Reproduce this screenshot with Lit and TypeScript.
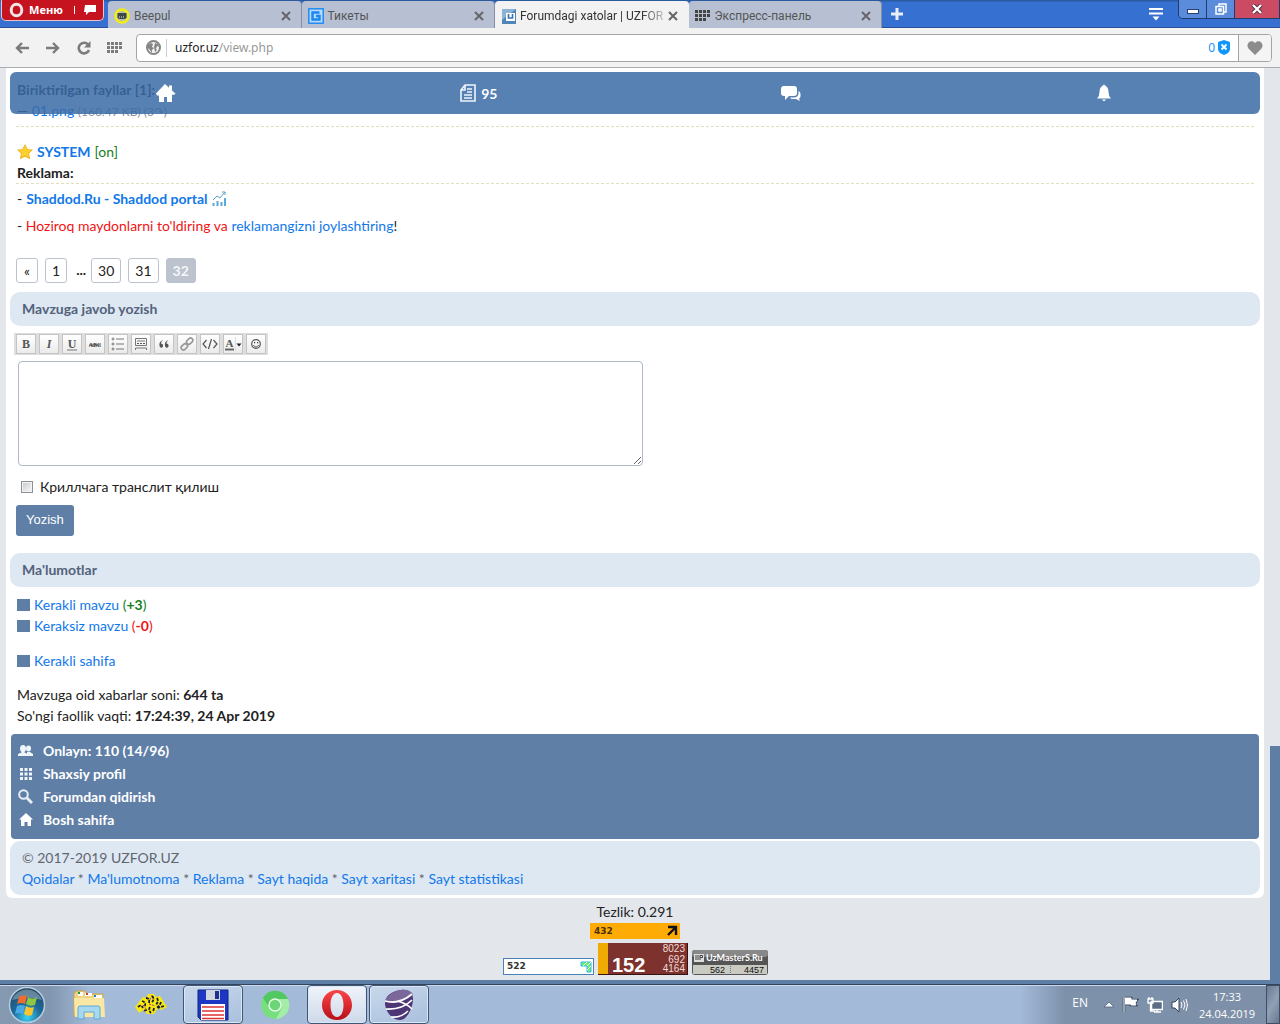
import { LitElement, html, svg, css } from "lit";
import { customElement } from "lit/decorators.js";
import { classMap } from "lit/directives/class-map.js";

const grid = svg`<g fill="currentColor">${[0, 1, 2].map((r) =>
  [0, 1, 2, 3].map((c) => (r === 2 && c === 3 ? "" : svg`<rect x=${c * 4} y=${1 + r * 4} width="3" height="3"/>`))
)}</g>`;

const house = svg`<path fill="currentColor" d="M0 9.5 9 0l4 3.8V1.5h3v5l3.6 3.3-1.6 1H16V18h-5v-5H8v5H3v-6.5H1z"/>`;

@customElement("browser-chrome")
export class BrowserChrome extends LitElement {
  static styles = css`
    :host { display: block; font: 12px/16px "Noto Sans", "Open Sans", sans-serif; color: #555; }
    button { border: 0; margin: 0; padding: 0; background: none; color: inherit; font: inherit; display: flex; align-items: center; justify-content: center; }
    svg { display: block; flex: none; }
    .strip { display: flex; align-items: flex-start; height: 28px; background: linear-gradient(#2b5b9f 0, #2b5b9f 1px, #3671d2 2px); border-bottom: 1px solid #2c509a; box-sizing: border-box; }
    .menu { width: 103px; height: 21px; margin: 0 4px 0 1px; background: #c5131f; border: 1px solid #eec3c8; border-top: 0; border-radius: 0 0 5px 5px; color: #fff; font: bold 11px/16px "Open Sans", sans-serif; gap: 5px; }
    .bar { width: 1px; height: 8px; background: #fff; margin: 0 4px 0 6px; }
    .tabs { display: flex; flex: 0 1 774px; min-width: 0; font-family: Roboto, "Open Sans", sans-serif; }
    .tab { flex: 1 1 0; min-width: 0; height: 27px; margin-top: 1px; box-sizing: border-box; display: flex; align-items: center; gap: 4px; padding: 2px 10px 0 6px; background: #b6c0d2; border-right: 1px solid #8390a8; border-radius: 4px 4px 0 0; }
    .tab.active { background: #f2f2f2; color: #333; border-color: #f2f2f2; height: 28px; gap: 3px; }
    .tab span { flex: 1; white-space: nowrap; }
    .tab.active span { -webkit-mask: linear-gradient(90deg, #000 84%, rgba(0, 0, 0, 0.2)); }
    .plus { width: 30px; height: 28px; color: #e8eefa; }
    .grow { flex: 1; }
    .more { width: 30px; height: 28px; color: #fff; margin-right: 7px; }
    .win { display: flex; border: 1px solid #20396f; border-top: 0; border-radius: 0 0 0 5px; overflow: hidden; }
    .win button { width: 28px; height: 18px; background: #5b8cdc; border-right: 1px solid #20396f; }
    .win .close { width: 44px; background: #cb4b62; border: 0; }
    .tools { display: flex; align-items: center; height: 39px; background: #f2f2f2; border-bottom: 1px solid #a9abae; color: #7b7b7b; padding: 0 8px 0 6px; }
    .tools > button { width: 31px; height: 28px; flex: none; }
    .address { flex: 1; display: flex; align-items: center; height: 28px; box-sizing: border-box; background: #fff; border: 1px solid #a2a5a8; border-radius: 4px; margin-left: 6px; padding-left: 9px; overflow: hidden; }
    .url { flex: 1; border-left: 1px solid #ccc; margin-left: 5px; padding-left: 8px; height: 18px; display: flex; align-items: center; color: #999; }
    .url b { font-weight: normal; color: #222; }
    .shield { color: #1b8fff; gap: 3px; margin-right: 8px; }
    .heart { width: 33px; height: 28px; border-left: 1px solid #a2a5a8; background: #f4f4f4; color: #8c8c8c; }
  `;

  private tab(title: string, icon: unknown, active = false) {
    return html`<div class=${classMap({ tab: true, active })} role="tab" aria-selected=${active}>
      <svg width="16" height="16" viewBox="0 0 16 16">${icon}</svg><span>${title}</span>
      <button aria-label="Закрыть"><svg width="10" height="10" viewBox="0 0 10 10"><path d="M1 1l8 8M9 1L1 9" stroke="#666" stroke-width="2"/></svg></button>
    </div>`;
  }

  render() {
    return html`
      <div class="strip">
        <button class="menu">
          <svg width="15" height="16" viewBox="0 0 15 16"><ellipse cx="7.5" cy="8" rx="5.3" ry="5.8" fill="none" stroke="#f3e6e6" stroke-width="3"/></svg>
          Меню <i class="bar"></i>
          <svg width="12" height="10" viewBox="0 0 12 10"><path d="M1 0h11v7H5L2 10V7H0z" fill="#fff"/></svg>
        </button>
        <div class="tabs" role="tablist">
          ${this.tab("Beepul", svg`<circle cx="8" cy="8" r="6.5" fill="#b9bfae" stroke="#f3ed12" stroke-width="2.6"/><path d="M3.500 5h9v5l-2 1H5.500l-2-1z" fill="#3d4649"/><path d="M5 9h6" stroke="#eee" stroke-dasharray="1 1"/>`)}
          ${this.tab("Тикеты", svg`<rect x=".8" y=".8" width="14.4" height="14.4" fill="#b9d8fb" stroke="#1688f3" stroke-width="1.4"/><path d="M11.5 4.5h-7v7h7V8H8" fill="none" stroke="#1688f3" stroke-width="2.4"/>`)}
          ${this.tab("Forumdagi xatolar | UZFOR", svg`<rect width="14" height="15" x="1" y="1" fill="#4f86b8"/><path d="M1 1h14L1 12z" fill="#8bb3d5"/><path d="M5 5h9v8H5z" fill="#fff"/><path d="M7.5 6v4h4V6" fill="none" stroke="#3770a7" stroke-width="1.6"/>`, true)}
          ${this.tab("Экспресс-панель", svg`<g color="#444" transform="translate(0 1)">${grid}</g>`)}
        </div>
        <button class="plus" aria-label="Новая вкладка"><svg width="12" height="12" viewBox="0 0 12 12"><path d="M6 0v12M0 6h12" stroke="currentColor" stroke-width="3"/></svg></button>
        <div class="grow"></div>
        <button class="more" aria-label="Меню вкладок"><svg width="14" height="14" viewBox="0 0 14 14"><path d="M0 2h14M0 6.500h14" stroke="currentColor" stroke-width="2"/><path d="M3.500 9.500h7L7 13.500z" fill="currentColor"/></svg></button>
        <div class="win">
          <button aria-label="Свернуть"><svg width="12" height="12" viewBox="0 0 12 12"><rect x=".5" y="6.500" width="11" height="4" fill="#fff" stroke="#274174"/></svg></button>
          <button aria-label="Развернуть"><svg width="12" height="12" viewBox="0 0 12 12"><g fill="none" stroke="#fff" stroke-width="1.500"><path d="M4 3V1h7v8H9"/><rect x="1" y="3.500" width="7.500" height="7.500"/><path d="M4 6h2v2H4z"/></g></svg></button>
          <button class="close" aria-label="Закрыть окно"><svg width="12" height="10" viewBox="0 0 12 10"><path d="M2 1l8 8M10 1L2 9" stroke="#4a2a3a" stroke-width="4"/><path d="M2 1l8 8M10 1L2 9" stroke="#fff" stroke-width="2.400"/></svg></button>
        </div>
      </div>
      <div class="tools">
        <button aria-label="Назад"><svg width="14" height="12" viewBox="0 0 14 12"><path d="M14 6H2M7 1L2 6l5 5" fill="none" stroke="currentColor" stroke-width="2.400"/></svg></button>
        <button aria-label="Вперёд"><svg width="14" height="12" viewBox="0 0 14 12"><path d="M0 6h12M7 1l5 5-5 5" fill="none" stroke="currentColor" stroke-width="2.400"/></svg></button>
        <button aria-label="Обновить"><svg width="14" height="14" viewBox="0 0 14 14"><path d="M11 3.500A5.300 5.300 0 1 0 12 9" fill="none" stroke="currentColor" stroke-width="2.600"/><path d="M13.500 0v6.500H7z" fill="currentColor"/></svg></button>
        <button aria-label="Экспресс-панель"><svg width="15" height="13" viewBox="0 0 15 13">${grid}</svg></button>
        <div class="address">
          <svg width="15" height="15" viewBox="0 0 15 15"><circle cx="7.500" cy="7.500" r="6.500" fill="#f2f2f2" stroke="#858585" stroke-width="2"/><path d="M2 5l3-2 2 1-1 3 2 1-2 2v3L4 10 2 8zM9 3l3 1 1 3-2-1-1 3 1 1-2 2-1-5z" fill="#858585"/></svg>
          <div class="url"><b>uzfor.uz</b>/view.php</div>
          <button class="shield">0 <svg width="12" height="15" viewBox="0 0 12 15"><path d="M6 0l6 2v7c0 3-3 5-6 6-3-1-6-3-6-6V2z" fill="#1296fb"/><path d="M3.500 4.500l5 5M8.500 4.500l-5 5" stroke="#fff" stroke-width="1.800"/></svg></button>
          <button class="heart" aria-label="Закладка"><svg width="16" height="14" viewBox="0 0 16 14"><path d="M8 14L1.500 7.500C-2 3 4-2.500 8 2c4-4.500 10 1 6.500 5.500z" fill="currentColor"/></svg></button>
        </div>
      </div>`;
  }
}

@customElement("forum-page")
export class ForumPage extends LitElement {
  static styles = css`
    :host { display: flex; position: relative; background: #e3e7ec; font: 14px/21px Lato, "Open Sans", sans-serif; color: #222; overflow: hidden; }
    svg { display: block; flex: none; }
    a { color: #1178ea; text-decoration: none; }
    p, h2 { margin: 0; }
    .scroll { flex: 1; min-width: 0; padding: 0 6px 5px; border-bottom: 4px solid #5e7ea6; }
    .track { width: 10px; flex: none; display: flex; align-items: flex-end; }
    .thumb { width: 10px; height: 26%; background: #5e7ea6; }
    .sheet { background: #fff; border-radius: 0 0 6px 6px; padding: 11px 4px 3px; }
    .inset { padding: 0 6px; }
    .topbar { position: absolute; top: 4px; left: 10px; right: 20px; height: 42px; border-radius: 6px; background: rgba(57, 107, 166, 0.85); display: grid; grid-template-columns: repeat(4, 1fr); place-items: center; font-weight: bold; }
    .topbar a { color: #fff; display: flex; align-items: center; gap: 5px; }
    .dash { border-bottom: 1px dashed #dfdfbd; }
    .files { padding: 0 1px 4px; margin-bottom: 14px; }
    .small { font-size: 12px; color: #8892a0; }
    .row { display: flex; align-items: center; gap: 4px; padding-left: 1px; }
    .on { color: #16801b; }
    .title { padding-left: 1px; font-weight: bold; margin-bottom: 4px; }
    .ad { margin-bottom: 6px; }
    .warn { color: #f01414; }
    .text { padding-left: 1px; }
    .pages { display: flex; margin: 22px 0 9px; line-height: 24px; }
    .pages a, .pages b { box-sizing: border-box; height: 25px; border: 1px solid #bcc3cf; border-radius: 3px; padding: 0 6px; margin-right: 7px; color: #222; min-width: 22px; text-align: center; }
    .pages i { margin: 0 5px 0 2px; font-weight: bold; font-style: normal; }
    .pages b { background: #bcc3cf; color: #f4f6f8; }
    h2 { background: #dee8f2; color: #53627b; border-radius: 10px; font-size: 14px; line-height: 34px; padding: 0 12px; }
    .editor { display: inline-flex; gap: 3px; margin: 7px 0 6px 4px; padding: 1px 2px; background: #dedede; height: 22px; box-sizing: border-box; }
    .editor button { box-sizing: border-box; width: 20px; height: 20px; padding: 0; border: 1px solid #c4c4c4; background: linear-gradient(#fff, #ebebeb); display: grid; place-items: center; }
    textarea { display: block; box-sizing: border-box; width: 50%; height: 105px; margin: 0 8px 10px; border: 1px solid #aebaca; border-radius: 4px; background: #fff; }
    .check { display: flex; align-items: center; gap: 7px; padding-left: 5px; }
    .check input { appearance: none; width: 12px; height: 12px; margin: 0; border: 1px solid #8c8f94; background: linear-gradient(135deg, #c5c9cd, #fafafa); box-shadow: inset 0 0 0 1px #f3f3f3; }
    .send { display: block; height: 31px; margin: 8px 0 17px 6px; padding: 0 10px 2px; border: 0; border-radius: 3px; background: #5f7fa7; color: #fff; font: 13px/20px "Liberation Sans", sans-serif; }
    .links { padding: 7px 6px 8px; }
    .sq { width: 13px; height: 12px; background: #5e7ea6; }
    .gap { margin: 14px 0 13px; }
    .red { color: #f01414; }
    .nav { margin: 0 1px 2px; padding: 5px 7px 8px; background: #5f7fa7; border-radius: 4px; font-weight: bold; }
    .nav a { display: flex; align-items: center; gap: 10px; color: #fff; line-height: 23px; width: max-content; }
    .foot { background: #dee8f2; border-radius: 10px; padding: 6px 12px; color: #5f6670; }
    .stats { display: flex; flex-direction: column; align-items: center; padding-top: 3px; }
    .counters { display: flex; align-items: flex-end; gap: 4px; margin-top: 4px; }
    .score { margin-top: 1px; }
    .counters svg { font-family: "Liberation Sans", sans-serif; }
  `;

  private tool(label: string, icon: unknown) {
    return html`<button type="button" aria-label=${label}><svg width="18" height="16" viewBox="0 0 18 16">${icon}</svg></button>`;
  }

  render() {
    const serif = "Liberation Serif";
    const letter = (t: string, style = "normal") =>
      svg`<text x="9" y="12" text-anchor="middle" font-family=${serif} font-weight="bold" font-style=${style} font-size="12" fill="#555">${t}</text>`;
    return html`
      <div class="scroll">
        <div class="sheet">
          <div class="inset">
            <div class="files dash"><b>Biriktirilgan fayllar [1]:</b><br />— <a href="#">01.png</a> <span class="small">(160.47 KB) (3↷)</span></div>
            <div class="row"><svg width="16" height="16" viewBox="0 0 16 16"><path d="M8 0l2.600 5 5.400.700-4 3.800 1.200 5.700L8 12.800 2.800 15.200 4 9.500 0 5.700 5.400 5z" fill="#f0b41c"/><path d="M8 1.500l2 4 4.500.5-3.500 3 1 4.500L8 11.500l-4 2L5 9 1.500 6 6 5.500z" fill="#fbcf30"/></svg>
              <a href="#"><b>SYSTEM</b></a><span class="on">[on]</span></div>
            <p class="title dash">Reklama:</p>
            <div class="row ad"><span>-</span><a href="#"><b>Shaddod.Ru - Shaddod portal</b></a>
              <svg width="14" height="16" viewBox="0 0 14 16"><path d="M1 9l4-4 3 2 5-6M10 1h3v3" fill="none" stroke="#5ba3cb"/><path d="M1.500 15v-3M5.500 15v-5M9.500 15v-4M13 15V7" stroke="#58aadc" stroke-width="2"/></svg></div>
            <p class="text">- <span class="warn">Hoziroq maydonlarni to'ldiring va</span> <a href="#">reklamangizni joylashtiring</a>!</p>
            <nav class="pages"><a href="#">«</a><a href="#">1</a><i>...</i><a href="#">30</a><a href="#">31</a><b>32</b></nav>
          </div>
          <h2>Mavzuga javob yozish</h2>
          <form>
            <div class="editor">
              ${this.tool("Bold", letter("B"))}
              ${this.tool("Italic", letter("I", "italic"))}
              ${this.tool("Underline", svg`${letter("U")}<path d="M4 14h10" stroke="#777"/>`)}
              ${this.tool("Strike", svg`<text x="9" y="11" text-anchor="middle" font-family=${serif} font-weight="bold" font-size="6" fill="#333">ABC</text><path d="M3 9h12" stroke="#555"/>`)}
              ${this.tool("List", svg`<path d="M7 3h8M7 8h8M7 13h8" stroke="#777"/><g fill="none" stroke="#777"><circle cx="4" cy="3" r="1"/><circle cx="4" cy="8" r="1"/><circle cx="4" cy="13" r="1"/></g>`)}
              ${this.tool("Spoiler", svg`<path d="M3.500 2.500h11v7h-11zM3.500 14v-2h11v2M5 5h8" fill="none" stroke="#777"/><path d="M5 7.500h8" stroke="#555" stroke-dasharray="2 1"/>`)}
              ${this.tool("Quote", svg`<path d="M8 4C5 5 4 7 4.500 10c1 3 4 2 3.500-1-.5-1-1-1.500-2-1.300C6 6 7 5 8 4zM13.500 4c-3 1-4 3-3.500 6 1 3 4 2 3.500-1-.5-1-1-1.500-2-1.300 0-1.700 1-2.700 2-3.700z" fill="#555"/>`)}
              ${this.tool("Link", svg`<g fill="none" stroke="#999" stroke-width="1.700"><rect x="8" y="3" width="7" height="4.500" rx="2.200" transform="rotate(-45 11.500 5)"/><rect x="3" y="8.500" width="7" height="4.500" rx="2.200" transform="rotate(-45 6.500 11)"/></g>`)}
              ${this.tool("Code", svg`<path d="M5.500 4L2 8l3.500 4M12.500 4L16 8l-3.500 4M10.500 3l-3 10" fill="none" stroke="#555" stroke-width="1.200"/>`)}
              ${this.tool("Color", svg`<text x="5.500" y="11" text-anchor="middle" font-family=${serif} font-weight="bold" font-size="11" fill="#555">A</text><path d="M1 13.500h9" stroke="#666" stroke-width="2"/><path d="M12.500 7.500h5L15 10.500z" fill="#222"/><path d="M11.500 1v14" stroke="#ddd"/>`)}
              ${this.tool("Smile", svg`<circle cx="9" cy="8" r="4.300" fill="none" stroke="#555" stroke-width="1.200"/><path d="M6.500 9c1 2.500 4 2.500 5 0" fill="none" stroke="#555"/><path d="M7 6h1.200v1.200H7zM10 6h1.200v1.200H10z" fill="#444"/>`)}
            </div>
            <textarea aria-label="Mavzuga javob yozish"></textarea>
            <div class="inset"><label class="check"><input type="checkbox" />Криллчага транслит қилиш</label></div>
            <button class="send" type="button">Yozish</button>
          </form>
          <h2>Ma'lumotlar</h2>
          <div class="links">
            <div class="row"><i class="sq"></i><span><a href="#">Kerakli mavzu</a> <span class="on">(<b>+3</b>)</span></span></div>
            <div class="row"><i class="sq"></i><span><a href="#">Keraksiz mavzu</a> <span class="red">(<b>-0</b>)</span></span></div>
            <div class="row gap"><i class="sq"></i><a href="#">Kerakli sahifa</a></div>
            <p class="text">Mavzuga oid xabarlar soni: <b>644 ta</b></p>
            <p class="text">So'ngi faollik vaqti: <b>17:24:39, 24 Apr 2019</b></p>
          </div>
          <nav class="nav">
            <a href="#"><svg width="15" height="15" viewBox="0 0 15 15"><g fill="#f0f5fa"><ellipse cx="10.500" cy="5.500" rx="2.500" ry="3"/><path d="M9 9h3l3 2v2H9z"/><ellipse cx="5" cy="5.500" rx="3" ry="3.500"/><path d="M3.500 8h3v1.500L10 11v2H0v-2l3.500-1.500z"/></g></svg>Onlayn: 110 (14/96)</a>
            <a href="#"><svg width="15" height="15" viewBox="0 0 15 15"><path d="M2 2h3v3H2zm4.500 0h3v3h-3zM11 2h3v3h-3zM2 6.500h3v3H2zm4.500 0h3v3h-3zm4.500 0h3v3h-3zM2 11h3v3H2zm4.500 0h3v3h-3zm4.500 0h3v3h-3z" fill="#f0f5fa"/></svg>Shaxsiy profil</a>
            <a href="#"><svg width="15" height="15" viewBox="0 0 15 15"><circle cx="5.500" cy="5.500" r="4.300" fill="none" stroke="#e6edf5" stroke-width="2"/><path d="M9 9l5 5" stroke="#e6edf5" stroke-width="3"/></svg>Forumdan qidirish</a>
            <a href="#"><svg width="15" height="15" viewBox="0 0 15 15"><path d="M8 1l7 6.500h-2V14H9.500v-4h-3v4H3V7.500H1z" fill="#fff"/></svg>Bosh sahifa</a>
          </nav>
          <div class="foot">© 2017-2019 UZFOR.UZ<br />
            <a href="#">Qoidalar</a> * <a href="#">Ma'lumotnoma</a> * <a href="#">Reklama</a> * <a href="#">Sayt haqida</a> * <a href="#">Sayt xaritasi</a> * <a href="#">Sayt statistikasi</a></div>
        </div>
        <div class="stats">
          <span>Tezlik: 0.291</span>
          <svg class="score" width="90" height="16" viewBox="0 0 90 16"><rect width="90" height="16" fill="#ffab05"/><text x="4" y="11" font-family="DejaVu Sans" font-weight="bold" font-size="9" fill="#4a3208">432</text><path d="M78 4h8v8M86 4l-8 8" fill="none" stroke="#111" stroke-width="2.400"/></svg>
          <div class="counters">
            <svg width="91" height="17" viewBox="0 0 91 17"><rect x=".5" y=".5" width="90" height="16" fill="#fff" stroke="#4a82b8"/><text x="4" y="11" font-family="DejaVu Sans" font-weight="bold" font-size="9" fill="#333">522</text><path d="M78 4h10v10h-4V8h-6z" fill="#6dee70" stroke="#35b5e8"/><path d="M80 8l4-4M84 8l4-4M84 12l4-4" stroke="#e8ffe8"/></svg>
            <svg width="90" height="32" viewBox="0 0 90 32"><rect width="90" height="32" fill="#7d322d"/><rect width="10" height="32" fill="#efab02"/><path d="M0 31.500h90M89.500 0v32" stroke="#38120f"/><g fill="#fff"><text x="14" y="29" font-size="20" font-weight="bold">152</text><g font-size="10" fill="#efdcda" text-anchor="end"><text x="87" y="9">8023</text><text x="87" y="20">692</text><text x="87" y="29">4164</text></g></g></svg>
            <svg width="76" height="26" viewBox="0 0 76 26"><rect y="1" width="76" height="25" rx="3" fill="#555"/><rect y="1" width="76" height="7" rx="3" fill="#888"/><rect x="1" y="16" width="74" height="9" fill="#c9cac2"/><path d="M2 5h10v8H2z" fill="#ddd"/><path d="M4 6v5M6 6v5M8 6v5M8 6.500h2.500v2H8" stroke="#444" fill="none"/><text x="14" y="12" font-size="9" font-weight="bold" fill="#fff" font-family="Lato">UzMasterS.Ru</text><g font-size="9" font-family="Liberation Sans" fill="#111"><text x="18" y="24">562</text><text x="52" y="24">4457</text></g><path d="M38.500 17v8" stroke="#777" stroke-dasharray="1 1"/></svg>
          </div>
        </div>
      </div>
      <div class="track"><div class="thumb"></div></div>
      <nav class="topbar">
        <a href="#" aria-label="Bosh sahifa"><svg width="20" height="18" viewBox="0 0 20 18">${house}</svg></a>
        <a href="#"><svg width="16" height="19" viewBox="0 0 16 19"><path d="M5 1h10v16H1V6zM5 1v5H1" fill="none" stroke="#eef4fb" stroke-width="1.600"/><path d="M7 5h5M7 8h5M4 11h8M4 14h8" stroke="#eef4fb" stroke-width="1.500"/></svg>95</a>
        <a href="#" aria-label="Xabarlar"><svg width="20" height="17" viewBox="0 0 20 17"><path d="M3 1h10q3 0 3 3v4q0 3-3 3H8l-4 4v-4H3q-3 0-3-3V4q0-3 3-3z" fill="#fff"/><path d="M17.500 6q2 .500 2 3v2q0 2-1.500 2.500l1 2.500-4-2h-4q-1 0-2-1.500h4q4 0 4.500-4z" fill="#fff"/></svg></a>
        <a href="#" aria-label="Bildirishnomalar"><svg width="14" height="18" viewBox="0 0 14 18"><path d="M6 1.500q1-2 2 0Q11.500 3 11.500 8q0 4 2.500 6.500H0Q2.500 12 2.500 8 2.500 3 6 1.500zM5 15.500h4q-2 3.500-4 0z" fill="#fff"/></svg></a>
      </nav>`;
  }
}

@customElement("task-bar")
export class TaskBar extends LitElement {
  static styles = css`
    :host { display: flex; align-items: center; height: 40px; box-sizing: border-box; border-top: 1px solid #34445c; box-shadow: inset 0 1px #c9d8ec; background: linear-gradient(90deg, #8599b1 0, #8095ae 50px, #a3bad9 90px, #a3bad9 calc(100% - 260px), #7d91ab calc(100% - 215px), #7e90a8 100%); color: #fff; font: 12px/17px "Open Sans", sans-serif; }
    button { border: 0; padding: 0; margin: 0; background: none; color: inherit; font: inherit; display: grid; place-items: center; height: 39px; width: 62px; flex: none; }
    svg { display: block; }
    .start { width: 54px; margin-right: 4px; }
    .open { width: 60px; border: 1px solid #3f5675; border-radius: 4px; box-shadow: inset 0 0 0 1px #dbe7f5; background: linear-gradient(160deg, #c8d8ec, #a9bfdd); margin: 0 1px; }
    .front { background: linear-gradient(#f0f4fa, #cdd9ea); }
    .grow { flex: 1; }
    .tray { display: flex; align-items: center; gap: 8px; }
    .lang { margin: 0 8px 4px 0; }
    .clock { width: 78px; margin-left: 4px; text-align: center; font-size: 11px; }
    .tray + .clock { margin-left: 0; }
    .desk { width: 14px; border: 1px solid #3d4e66; background: linear-gradient(120deg, #6a7c93, #90a1b5, #67798f); }
  `;

  render() {
    return html`
      <button class="start" aria-label="Пуск"><svg width="38" height="38" viewBox="0 0 38 38"><defs><radialGradient id="orb" cx=".5" cy=".85" r=".8"><stop offset="0" stop-color="#3ad1f3"/><stop offset=".5" stop-color="#1d6a9c"/><stop offset="1" stop-color="#254a66"/></radialGradient></defs><circle cx="19" cy="19" r="17.500" fill="url(#orb)" stroke="#b5cbdc" stroke-width="1.500"/><path d="M4 14a16 16 0 0 1 30 0q-14-5-30 0z" fill="#fff" opacity=".3"/><path d="M11 11q4-3 8-1l-2 8q-4-2-8 0z" fill="#ef6b2e"/><path d="M20 11q5 3 9 0l-2 8q-5 2-9-1z" fill="#8fc642"/><path d="M9 20q4-2 8 0l-2 8q-4-2-8 0z" fill="#4aa8e5"/><path d="M18 20q4 3 8 1l-2 8q-4 2-8-1z" fill="#fcc52d"/></svg></button>
      <button aria-label="Проводник"><svg width="34" height="32" viewBox="0 0 34 32"><path d="M2 4l3-2h8l2 3h16v22H2z" fill="#eed480" stroke="#c5a252"/><path d="M6 3h5v4H6zM13 4h7v3h-7zM22 6h8v3h-8z" fill="#fff"/><path d="M6 3h2v2H6z" fill="#189b2b"/><path d="M14 4h2v2h-2z" fill="#d13c2d"/><path d="M22 6h2v2h-2z" fill="#2e7cc5"/><path d="M2 9h30l1 19H3z" fill="#fae7a3"/><path d="M6 19q0-2 2-2h18q2 0 2 2v11h-6v-7H12v7H6z" fill="#a6d8ef" stroke="#5daad4"/></svg></button>
      <button aria-label="Файлы"><svg width="34" height="24" viewBox="0 0 34 24"><path d="M1 14L9 4l3 1 2-4h6l2 3 4-1 7 11-6 3-3-2-4 6h-7l-3-4-5 3z" fill="#f6e90e"/><path d="M4 14q3-3 5 1M8 8q4 1 3 5M12 5q4 0 3 5M18 3q3 3 0 6M23 5q2 3-1 7M27 9q-1 4-5 6M30 13l-6 2M16 14q-2 3 1 6M13 17l-4 1M20 15l-1 4" fill="none" stroke="#1a1a3a" stroke-width="1.800" stroke-dasharray="3 1"/><path d="M9 12l3 4M15 11l6 2M18 2l-2 5" stroke="#b634a3" stroke-dasharray="2 1"/></svg></button>
      <button class="open" aria-label="Total Commander"><svg width="32" height="32" viewBox="0 0 32 32"><path d="M1 1h30v30H4l-3-3z" fill="#1d36c4" stroke="#10227c"/><path d="M9 1h14v10H9z" fill="#cfd6df"/><path d="M18 2h4v8h-4z" fill="#1e328d"/><path d="M4 15h24v16H4z" fill="#fff"/><path d="M5 18h22M5 22h22M5 26h22M5 29.500h22" stroke="#e13333" stroke-width="1.500"/></svg></button>
      <button aria-label="Chromium"><svg width="30" height="30" viewBox="0 0 30 30"><circle cx="15" cy="15" r="14" fill="#78df80"/><path d="M3 8A14 14 0 0 1 28 9H15l-6 8z" fill="#52c762"/><path d="M28 9a14 14 0 0 1-12 20l6-11-3-9z" fill="#a3eda7"/><circle cx="15" cy="15" r="6" fill="#6bd577" stroke="#e7fbe7" stroke-width="1.500"/></svg></button>
      <button class="open front" aria-label="Opera"><svg width="32" height="32" viewBox="0 0 32 32"><defs><linearGradient id="op" x2="0" y2="1"><stop stop-color="#fb4549"/><stop offset="1" stop-color="#b90f18"/></linearGradient></defs><path fill="url(#op)" fill-rule="evenodd" d="M16 1C7 1 1 8 1 16s6 15 15 15 15-7 15-15S25 1 16 1zm0 3c4 0 6.500 5 6.500 12S20 28 16 28 9.500 23 9.500 16 12 4 16 4z"/></svg></button>
      <button class="open" aria-label="Ucell"><svg width="32" height="32" viewBox="0 0 32 32"><path d="M18 1c8-1 12 3 12 9 0 9-6 21-13 21C9 31 2 22 2 14 2 7 9 2 18 1z" fill="#4d3576"/><path d="M18 1c8-1 12 3 12 5-9 7-18 9-28 7C3 7 10 2 18 1z" fill="#7b6799"/><path d="M2 12q14 4 27-7M14 12q9 2 15 8M3 20q16 1 26-9M8 28q10 1 17-6" fill="none" stroke="#fff" stroke-width="1.700"/></svg></button>
      <div class="grow"></div>
      <div class="tray">
        <span class="lang">EN</span>
        <svg width="10" height="6" viewBox="0 0 10 6"><path d="M5 0l5 5H0z" fill="#f3f6fa" stroke="#51627a" stroke-width=".8"/></svg>
        <svg width="17" height="17" viewBox="0 0 17 17"><path d="M2 1v15M3 2h6v2h6l-2 3 1 2H9V8H3" fill="#fff" stroke="#34445c" stroke-width="2.500"/><path d="M2 1v15M3 2h6v2h6l-2 3 1 2H9V8H3" fill="#fff" stroke="#fff"/></svg>
        <svg width="16" height="16" viewBox="0 0 16 16"><rect x="4.500" y="4.500" width="11" height="8" fill="#5b6d85" stroke="#fff" stroke-width="1.500"/><path d="M7 15h7M10 12v3M1 2h5v4H1zM2 0v2M5 0v2M3.500 6v8H8" fill="none" stroke="#fff" stroke-width="1.300"/></svg>
        <svg width="17" height="16" viewBox="0 0 17 16"><path d="M1 5h3l4-4v14l-4-4H1z" fill="#fff" stroke="#34445c"/><path d="M10 5q2 3 0 6M12.500 3.500q3 4.500 0 9M15 2q3 6 0 12" fill="none" stroke="#fff"/></svg>
      </div>
      <div class="clock">17:33<br />24.04.2019</div>
      <button class="desk" aria-label="Свернуть все окна"></button>`;
  }
}

@customElement("app-root")
export class AppRoot extends LitElement {
  static styles = css`
    :host { display: flex; flex-direction: column; min-height: 100vh; }
    .page { flex: 1; }
  `;
  render() {
    return html`<browser-chrome></browser-chrome><forum-page class="page"></forum-page><task-bar></task-bar>`;
  }
}
